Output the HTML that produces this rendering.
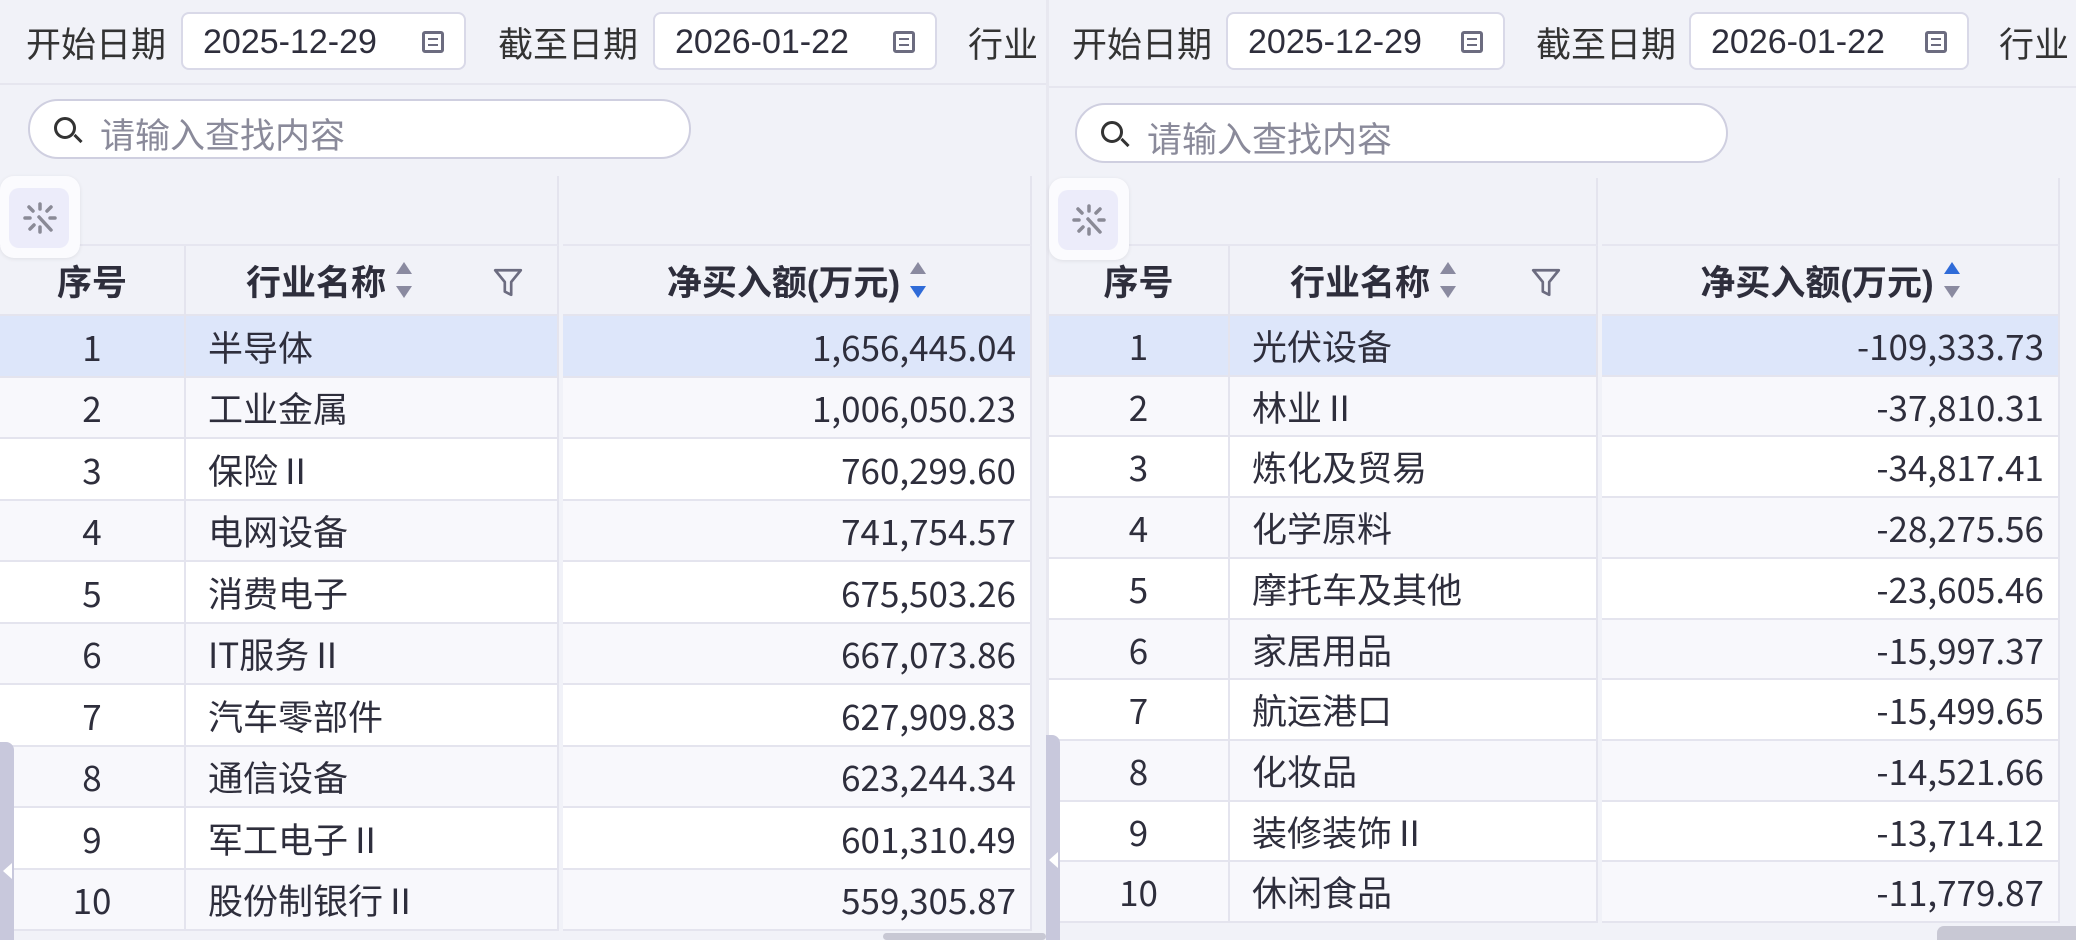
<!DOCTYPE html>
<html><head><meta charset="utf-8"><style>
*{margin:0;padding:0;box-sizing:border-box}
body{width:2076px;height:940px;overflow:hidden;background:#f1f2f8;font-family:"Liberation Sans","Noto Sans CJK SC",sans-serif;color:#2e2e3c;position:relative}
.a{position:absolute}
.lbl{font-size:35px;top:17px;color:#333}
.date{top:12px;height:58px;background:#fff;border:2px solid #d9d9e8;border-radius:8px;font-size:34px;padding:9px 0 0 20px}
.cal{position:absolute;right:20px;top:17px;width:22px;height:22px;border:3px solid #6c6c80;border-radius:3px}
.cal:before,.cal:after{content:"";position:absolute;left:3px;right:3px;height:2px;background:#6c6c80;top:4px}
.cal:after{top:10px}
.sep{height:2px;background:#e6e6ef}
.search{height:60px;background:#fff;border:2px solid #cfcfe0;border-radius:30px;font-size:35px;color:#8a8a9a;padding:7px 0 0 70px}
.mag{position:absolute;left:24px;top:16px;width:22px;height:22px;border:3px solid #333;border-radius:50%}
.mag:after{content:"";position:absolute;left:16px;top:17px;width:10px;height:3px;background:#333;transform:rotate(45deg)}
.grp{background:#f1f2f8;border-bottom:2px solid #e6e6f0}
.hd{background:#f1f2f8;font-weight:bold;font-size:35px;display:flex;align-items:center;justify-content:center;border-right:2px solid #e4e4ee;border-bottom:2px solid #e4e4ee}
.c{display:flex;align-items:center;font-size:35px;font-family:"Liberation Sans Narrow","Noto Sans CJK SC",sans-serif;border-right:2px solid #e4e4ee;border-bottom:2px solid #e4e4ee}
.ctr{justify-content:center}.lft{padding-left:22px}.rgt{justify-content:flex-end;padding-right:14px}
.sort{display:inline-block;width:16px;margin-left:10px;position:relative;height:36px;vertical-align:middle}
.sort i{position:absolute;left:0;border-left:8px solid transparent;border-right:8px solid transparent}
.sort .u{top:0;border-bottom:12px solid #8a8aa0}.sort .d{bottom:0;border-top:12px solid #8a8aa0}
.sort .b{border-bottom-color:#2f6bd8}.sort .bd{border-top-color:#2f6bd8}
.icon{width:80px;height:82px;background:#fbfbfe;border-radius:14px;box-shadow:0 1px 4px rgba(0,0,0,.08)}
.icon div{position:absolute;left:9px;top:12px;width:60px;height:60px;background:#ececfa;border-radius:10px}
.tab{width:14px;background:#c8c8dc;border-radius:0 8px 0 0}
</style></head><body>

<div class="a lbl" style="left:26px">开始日期</div>
<div class="a date" style="left:181px;width:285px">2025-12-29<span class="cal"></span></div>
<div class="a lbl" style="left:498px">截至日期</div>
<div class="a date" style="left:653px;width:284px">2026-01-22<span class="cal"></span></div>
<div class="a lbl" style="left:968px">行业</div>
<div class="a sep" style="left:0;top:83px;width:1046px"></div>
<div class="a search" style="left:28px;top:99px;width:663px"><span class="mag"></span>请输入查找内容</div>
<div class="a grp" style="left:0;top:176px;width:559px;height:70px;border-right:2px solid #e4e4ee"></div>
<div class="a grp" style="left:563px;top:176px;width:469px;height:70px;border-right:2px solid #e4e4ee"></div>
<div class="a hd" style="left:0;top:246px;width:186px;height:70px">序号</div>
<div class="a hd" style="left:186px;top:246px;width:373px;height:70px;justify-content:flex-start;padding-left:60px">行业名称<span class="sort"><i class="u"></i><i class="d"></i></span>
<svg style="position:absolute;left:306px;top:20px" width="32" height="32" viewBox="0 0 30 30"><path d="M3 4H27L18 15V27L12 24V15Z" fill="none" stroke="#6c6c80" stroke-width="2.5" stroke-linejoin="round"/></svg></div>
<div class="a hd" style="left:563px;top:246px;width:469px;height:70px">净买入额(万元)<span class="sort"><i class="u"></i><i class="d bd"></i></span></div>
<div class="a icon" style="left:0;top:176px"><div></div>
<svg class="a" style="left:20px;top:22px" width="40" height="40" viewBox="0 0 40 40" stroke="#8a8a96" stroke-width="3.5" stroke-linecap="round"><path d="M20 6V11M9 9l4 4M31 9l-4 4M5 20H10M30 20H35M10 31l4-4M20 29V34M19 19L31 32"/></svg></div>

<div id="L"></div>
<div class="a tab" style="left:0;top:742px;height:198px"></div>
<svg class="a" style="left:1px;top:863px" width="12" height="16"><path d="M11 0L2 8L11 16Z" fill="#fff"/></svg>
<div class="a" style="left:883px;top:933px;width:163px;height:7px;background:#c8c8d4;border-radius:4px"></div>

<div class="a" style="left:1046px;top:0;width:3px;height:940px;background:#e8e8f0"></div>
<div class="a lbl" style="left:1072px">开始日期</div>
<div class="a date" style="left:1226px;width:279px">2025-12-29<span class="cal"></span></div>
<div class="a lbl" style="left:1536px">截至日期</div>
<div class="a date" style="left:1689px;width:280px">2026-01-22<span class="cal"></span></div>
<div class="a lbl" style="left:1999px">行业</div>
<div class="a sep" style="left:1049px;top:86px;width:1027px"></div>
<div class="a search" style="left:1075px;top:103px;width:653px"><span class="mag"></span>请输入查找内容</div>
<div class="a grp" style="left:1049px;top:178px;width:549px;height:68px;border-right:2px solid #e4e4ee"></div>
<div class="a grp" style="left:1602px;top:178px;width:458px;height:68px;border-right:2px solid #e4e4ee"></div>
<div class="a hd" style="left:1049px;top:246px;width:181px;height:70px">序号</div>
<div class="a hd" style="left:1230px;top:246px;width:368px;height:70px;justify-content:flex-start;padding-left:60px">行业名称<span class="sort"><i class="u"></i><i class="d"></i></span>
<svg style="position:absolute;left:300px;top:20px" width="32" height="32" viewBox="0 0 30 30"><path d="M3 4H27L18 15V27L12 24V15Z" fill="none" stroke="#6c6c80" stroke-width="2.5" stroke-linejoin="round"/></svg></div>
<div class="a hd" style="left:1602px;top:246px;width:458px;height:70px">净买入额(万元)<span class="sort"><i class="u b"></i><i class="d"></i></span></div>
<div class="a icon" style="left:1049px;top:178px"><div></div>
<svg class="a" style="left:20px;top:22px" width="40" height="40" viewBox="0 0 40 40" stroke="#8a8a96" stroke-width="3.5" stroke-linecap="round"><path d="M20 6V11M9 9l4 4M31 9l-4 4M5 20H10M30 20H35M10 31l4-4M20 29V34M19 19L31 32"/></svg></div>
<div id="R"></div>
<div class="a tab" style="left:1046px;top:735px;height:205px"></div>
<svg class="a" style="left:1047px;top:852px" width="12" height="16"><path d="M11 0L2 8L11 16Z" fill="#fff"/></svg>
<div class="a" style="left:1937px;top:926px;width:139px;height:14px;background:#c8c8d4;border-radius:7px 0 0 0"></div>

<script>
function build(id,x,cols,top,h,data){
 var s='';
 data.forEach(function(r,i){
  var y=top+i*h,bg=i==0?'#dde6fa':(i%2?'#f8f8fc':'#ffffff');
  var yy=Math.round(y),hh=Math.round(y+h)-yy;
  s+='<div class="a c ctr" style="left:'+cols[0]+'px;top:'+yy+'px;width:'+(cols[1]-cols[0])+'px;height:'+hh+'px;background:'+bg+'">'+(i+1)+'</div>';
  s+='<div class="a c lft" style="left:'+cols[1]+'px;top:'+yy+'px;width:'+(cols[2]-cols[1])+'px;height:'+hh+'px;background:'+bg+'">'+r[0]+'</div>';
  s+='<div class="a c rgt" style="left:'+cols[3]+'px;top:'+yy+'px;width:'+(cols[4]-cols[3])+'px;height:'+hh+'px;background:'+bg+'">'+r[1]+'</div>';
 });
 document.getElementById(id).outerHTML=s;
}
build('L',0,[0,186,559,563,1032],316,61.5,[["半导体","1,656,445.04"],["工业金属","1,006,050.23"],["保险Ⅱ","760,299.60"],["电网设备","741,754.57"],["消费电子","675,503.26"],["IT服务Ⅱ","667,073.86"],["汽车零部件","627,909.83"],["通信设备","623,244.34"],["军工电子Ⅱ","601,310.49"],["股份制银行Ⅱ","559,305.87"]]);
build('R',0,[1049,1230,1598,1602,2060],316,60.7,[["光伏设备","-109,333.73"],["林业Ⅱ","-37,810.31"],["炼化及贸易","-34,817.41"],["化学原料","-28,275.56"],["摩托车及其他","-23,605.46"],["家居用品","-15,997.37"],["航运港口","-15,499.65"],["化妆品","-14,521.66"],["装修装饰Ⅱ","-13,714.12"],["休闲食品","-11,779.87"]]);
</script>
</body></html>
